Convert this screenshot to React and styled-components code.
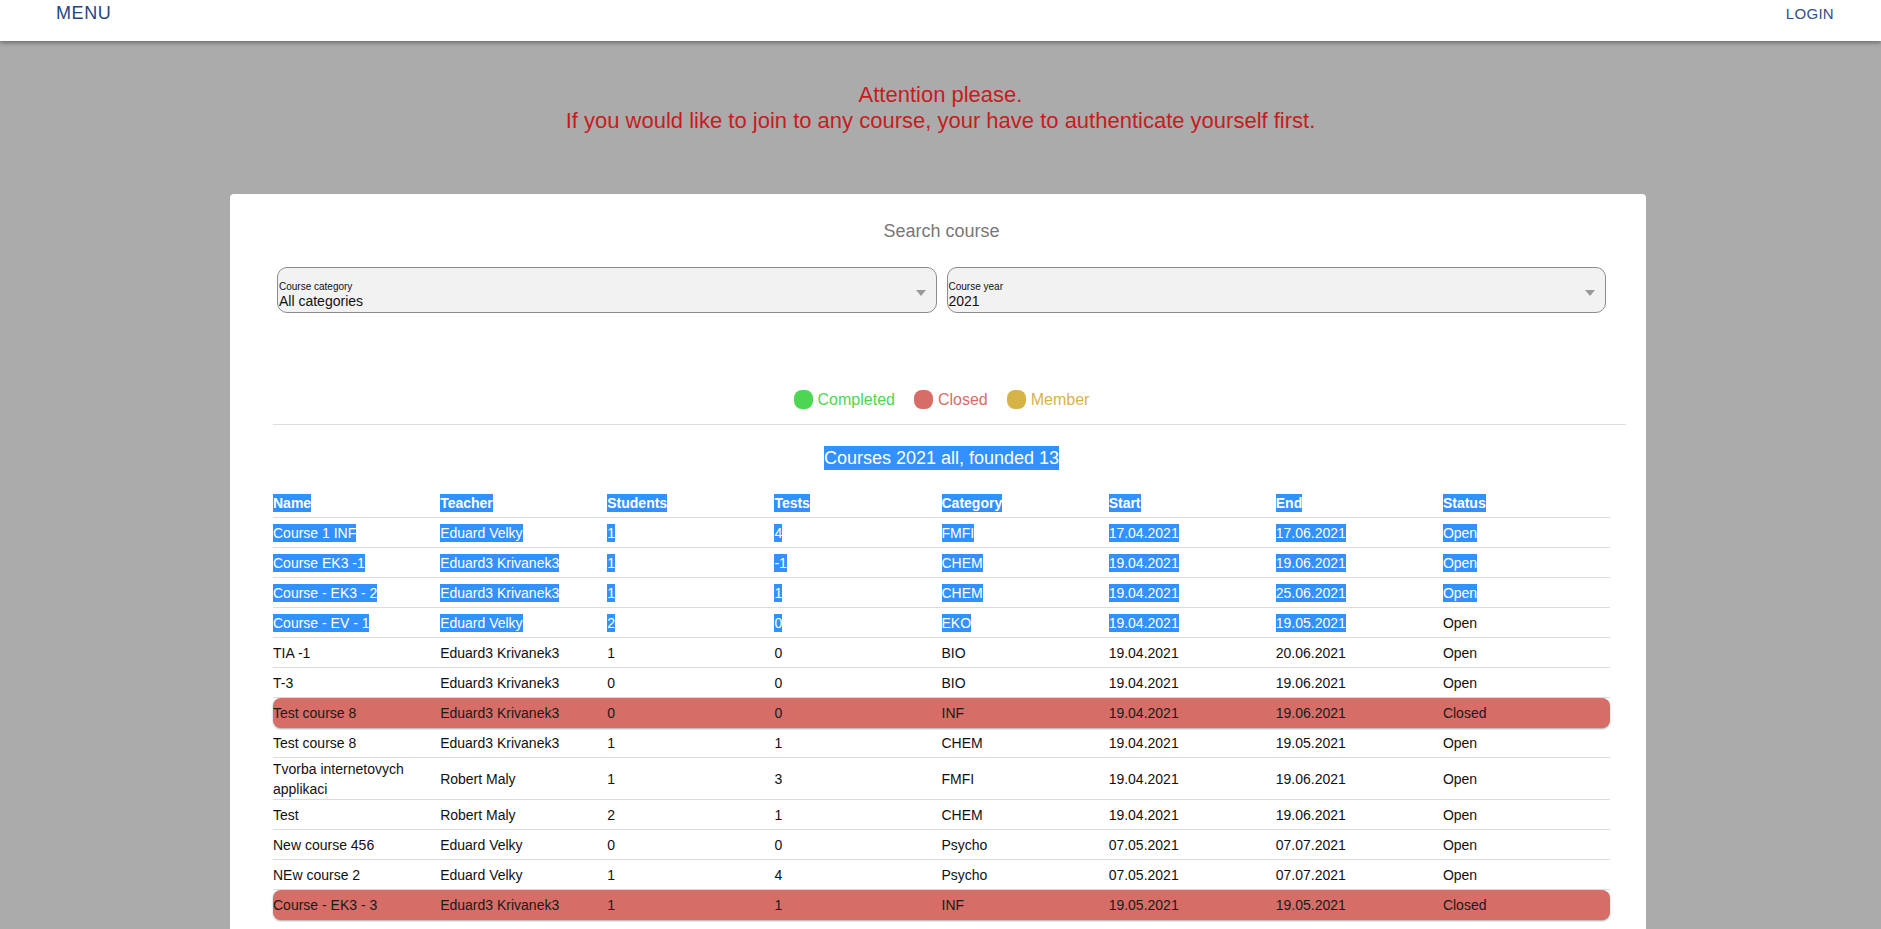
import React from "react";
import styled, { createGlobalStyle } from "styled-components";

const Global = createGlobalStyle`
  html, body { margin: 0; padding: 0; }
  body {
    background: #ababab;
    font-family: "Liberation Sans", Arial, sans-serif;
    color: #111;
    min-height: 929px;
  }
`;

const TopBar = styled.header`
  position: relative;
  z-index: 2;
  height: 41px;
  box-sizing: border-box;
  background: #fff;
  box-shadow: 0 2px 4px rgba(0, 0, 0, 0.35);
  display: flex;
  justify-content: space-between;
  align-items: flex-start;
  padding: 0 47px 0 56px;
`;

const NavButton = styled.div`
  font-size: ${(p) => p.$size}px;
  letter-spacing: ${(p) => p.$spacing}px;
  line-height: 1;
  padding-top: ${(p) => p.$top}px;
  color: ${(p) => p.$color};
  text-transform: uppercase;
`;

const Notice = styled.div`
  margin-top: 41px;
  text-align: center;
  color: #c81b1e;
  font-size: 22px;
  line-height: 26px;
`;

const Card = styled.main`
  width: 1416px;
  box-sizing: border-box;
  margin: 60px 0 0 calc(50% - 710.5px);
  background: #fff;
  border-radius: 4px 4px 0 0;
  padding: 27px 36px 40px 43px;
`;

const SearchTitle = styled.div`
  text-align: center;
  font-size: 18px;
  line-height: 21px;
  color: #777;
`;

const SelectRow = styled.div`
  margin-top: 25px;
  padding: 0 4px;
  display: grid;
  grid-template-columns: 1fr 1fr;
  gap: 10px;
`;

const SelectBox = styled.div`
  height: 46px;
  box-sizing: border-box;
  border: 1px solid #8c8c8c;
  border-radius: 10px;
  background: #f2f2f2;
  display: flex;
  align-items: flex-start;
  padding: 13px 10px 0 1px;
`;

const SelectText = styled.div`
  flex: 1;
  display: flex;
  flex-direction: column;
`;

const SelectLabel = styled.span`
  font-size: 10px;
  line-height: 12px;
  color: #111;
`;

const SelectValue = styled.span`
  font-size: 14px;
  line-height: 16px;
  color: #111;
`;

const Caret = styled.span`
  margin-top: 9px;
  width: 0;
  height: 0;
  border-left: 5px solid transparent;
  border-right: 5px solid transparent;
  border-top: 6px solid #9a9a9a;
`;

const Legend = styled.div`
  margin-top: 77px;
  display: flex;
  justify-content: center;
  gap: 19px;
`;

const LegendItem = styled.div`
  display: flex;
  align-items: center;
  gap: 5px;
  font-size: 16px;
  line-height: 19px;
  color: ${(p) => p.$color};
`;

const Dot = styled.span`
  width: 19px;
  height: 19px;
  border-radius: 8px;
  background: ${(p) => p.$color};
`;

const Divider = styled.hr`
  margin: 15px -16px 0 0;
  border: 0;
  border-top: 1px solid #dedede;
  height: 0;
`;

const TableTitle = styled.div`
  margin-top: 23px;
  text-align: center;
  font-size: 18px;
  line-height: 21px;
`;

const Sel = styled.span`
  background: #3390ff;
  color: #fff;
  padding: ${(p) => (p.$big ? "2px 0" : "1px 0")};
`;

const Table = styled.div`
  margin-top: 19px;
  width: 1337px;
  font-size: 14px;
`;

const Row = styled.div`
  display: grid;
  grid-template-columns: repeat(8, 1fr);
  align-items: center;
  min-height: 30px;
  box-sizing: border-box;
  line-height: 20px;
  padding-top: ${(p) => (p.$tall ? "1px" : "0")};
  font-weight: ${(p) => (p.$head ? 700 : 400)};
  border-bottom: ${(p) => (p.$closed ? "0" : "1px solid #dcdcdc")};
  background: ${(p) => (p.$closed ? "#d66d66" : "transparent")};
  border-radius: ${(p) => (p.$closed ? "8px" : "0")};
  box-shadow: ${(p) => (p.$closed ? "0 1px 2px rgba(0,0,0,0.35)" : "none")};
  color: ${(p) => (p.$closed ? "#1a1a1a" : "#111")};
`;

const Cell = styled.div`
  padding-right: 10px;
`;

const headers = ["Name", "Teacher", "Students", "Tests", "Category", "Start", "End", "Status"];

const rows = [
  { c: ["Course 1 INF", "Eduard Velky", "1", "4", "FMFI", "17.04.2021", "17.06.2021", "Open"], sel: 8 },
  { c: ["Course EK3 -1", "Eduard3 Krivanek3", "1", "-1", "CHEM", "19.04.2021", "19.06.2021", "Open"], sel: 8 },
  { c: ["Course - EK3 - 2", "Eduard3 Krivanek3", "1", "1", "CHEM", "19.04.2021", "25.06.2021", "Open"], sel: 8 },
  { c: ["Course - EV - 1", "Eduard Velky", "2", "0", "EKO", "19.04.2021", "19.05.2021", "Open"], sel: 7 },
  { c: ["TIA -1", "Eduard3 Krivanek3", "1", "0", "BIO", "19.04.2021", "20.06.2021", "Open"] },
  { c: ["T-3", "Eduard3 Krivanek3", "0", "0", "BIO", "19.04.2021", "19.06.2021", "Open"] },
  { c: ["Test course 8", "Eduard3 Krivanek3", "0", "0", "INF", "19.04.2021", "19.06.2021", "Closed"], closed: true },
  { c: ["Test course 8", "Eduard3 Krivanek3", "1", "1", "CHEM", "19.04.2021", "19.05.2021", "Open"] },
  { c: ["Tvorba internetovych applikaci", "Robert Maly", "1", "3", "FMFI", "19.04.2021", "19.06.2021", "Open"], tall: true },
  { c: ["Test", "Robert Maly", "2", "1", "CHEM", "19.04.2021", "19.06.2021", "Open"] },
  { c: ["New course 456", "Eduard Velky", "0", "0", "Psycho", "07.05.2021", "07.07.2021", "Open"] },
  { c: ["NEw course 2", "Eduard Velky", "1", "4", "Psycho", "07.05.2021", "07.07.2021", "Open"] },
  { c: ["Course - EK3 - 3", "Eduard3 Krivanek3", "1", "1", "INF", "19.05.2021", "19.05.2021", "Closed"], closed: true },
];

const legend = [
  { label: "Completed", color: "#4cd652" },
  { label: "Closed", color: "#d66d66" },
  { label: "Member", color: "#d6b347" },
];

export default function App() {
  return (
    <>
      <Global />
      <TopBar>
        <NavButton $size={18} $spacing={0.6} $top={4} $color="#27467f">Menu</NavButton>
        <NavButton $size={15} $spacing={0.3} $top={6} $color="#34508a">Login</NavButton>
      </TopBar>
      <Notice>
        <div>Attention please.</div>
        <div>If you would like to join to any course, your have to authenticate yourself first.</div>
      </Notice>
      <Card>
        <SearchTitle>Search course</SearchTitle>
        <SelectRow>
          <SelectBox>
            <SelectText>
              <SelectLabel>Course category</SelectLabel>
              <SelectValue>All categories</SelectValue>
            </SelectText>
            <Caret />
          </SelectBox>
          <SelectBox>
            <SelectText>
              <SelectLabel>Course year</SelectLabel>
              <SelectValue>2021</SelectValue>
            </SelectText>
            <Caret />
          </SelectBox>
        </SelectRow>
        <Legend>
          {legend.map((l) => (
            <LegendItem key={l.label} $color={l.color}>
              <Dot $color={l.color} />
              {l.label}
            </LegendItem>
          ))}
        </Legend>
        <Divider />
        <TableTitle>
          <Sel $big>Courses 2021 all, founded 13</Sel>
        </TableTitle>
        <Table>
          <Row $head>
            {headers.map((h) => (
              <Cell key={h}>
                <Sel>{h}</Sel>
              </Cell>
            ))}
          </Row>
          {rows.map((r, i) => (
            <Row key={i} $closed={r.closed} $tall={r.tall}>
              {r.c.map((v, j) => (
                <Cell key={j}>{r.sel && j < r.sel ? <Sel>{v}</Sel> : v}</Cell>
              ))}
            </Row>
          ))}
        </Table>
      </Card>
    </>
  );
}
